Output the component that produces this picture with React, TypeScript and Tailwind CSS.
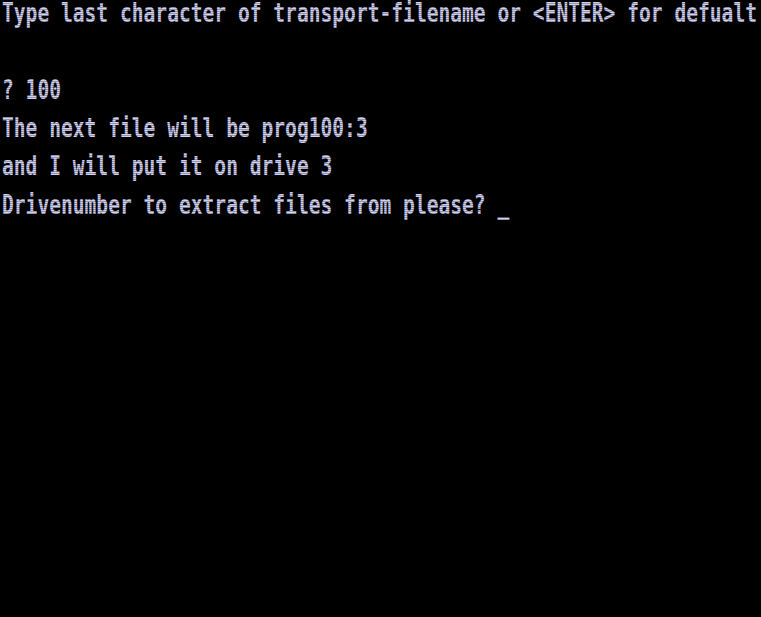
const lines = [
  "Type last character of transport-filename or <ENTER> for defualt",
  "",
  "? 100",
  "The next file will be prog100:3",
  "and I will put it on drive 3",
  "Drivenumber to extract files from please? _",
];

export default function App() {
  return (
    <div className="relative w-[761px] h-[617px] overflow-hidden bg-black">
      <div
        className="pl-[2px] origin-top-left scale-y-[1.38] whitespace-pre text-[19.6px] leading-[19px] font-bold text-[#d2d2f4]"
        style={{ fontFamily: '"DejaVu Sans Mono", "Liberation Mono", monospace' }}
      >
        {lines.map((line, i) => (
          <div key={i} className="h-[27.8px]">
            {line}
          </div>
        ))}
      </div>
      {/* scanlines */}
      <div className="pointer-events-none absolute inset-0 bg-[repeating-linear-gradient(to_bottom,transparent_0px,transparent_1px,rgba(0,0,0,0.3)_1px,rgba(0,0,0,0.3)_2px)]" />
    </div>
  );
}
